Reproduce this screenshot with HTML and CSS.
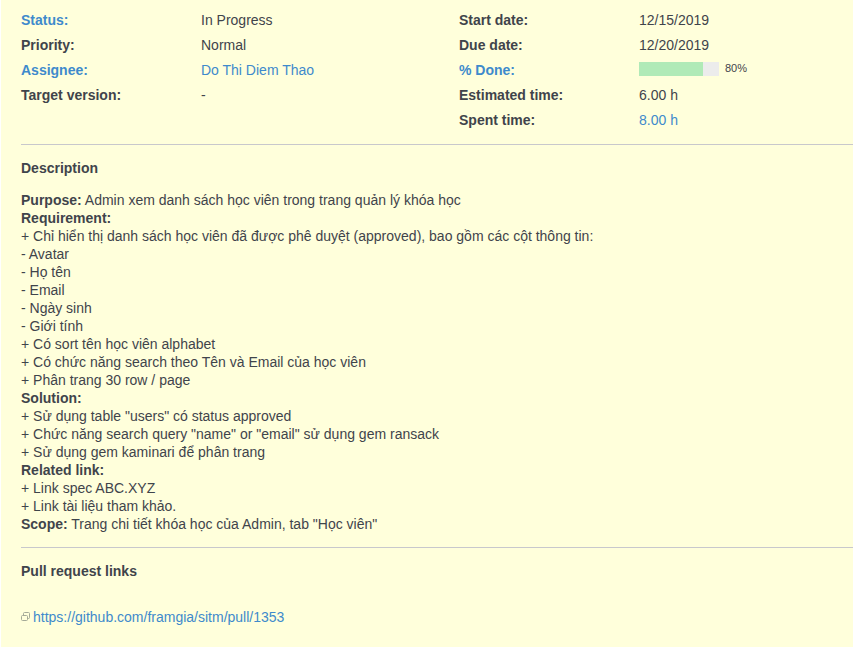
FILE: index.html
```html
<!DOCTYPE html>
<html lang="vi">
<head>
<meta charset="utf-8">
<title>Issue</title>
<link rel="stylesheet" href="styles.css">
</head>
<body>
<main class="issue">
  <section class="attributes">
    <dl class="attribute-list">
      <dt><a href="#status">Status:</a></dt><dd>In Progress</dd>
      <dt>Priority:</dt><dd>Normal</dd>
      <dt><a href="#assignee">Assignee:</a></dt><dd><a href="#user">Do Thi Diem Thao</a></dd>
      <dt>Target version:</dt><dd>-</dd>
    </dl>
    <dl class="attribute-list">
      <dt>Start date:</dt><dd>12/15/2019</dd>
      <dt>Due date:</dt><dd>12/20/2019</dd>
      <dt><a href="#done">% Done:</a></dt>
      <dd class="done"><span class="progress"><span class="progress-fill" style="width: 80%"></span></span><span class="percent">80%</span></dd>
      <dt>Estimated time:</dt><dd>6.00 h</dd>
      <dt>Spent time:</dt><dd><a href="#time">8.00 h</a></dd>
    </dl>
  </section>
  <section class="block description">
    <h2>Description</h2>
    <p><strong>Purpose:</strong> Admin xem danh sách học viên trong trang quản lý khóa học<br>
    <strong>Requirement:</strong><br>
    + Chỉ hiển thị danh sách học viên đã được phê duyệt (approved), bao gồm các cột thông tin:<br>
    - Avatar<br>
    - Họ tên<br>
    - Email<br>
    - Ngày sinh<br>
    - Giới tính<br>
    + Có sort tên học viên alphabet<br>
    + Có chức năng search theo Tên và Email của học viên<br>
    + Phân trang 30 row / page<br>
    <strong>Solution:</strong><br>
    + Sử dụng table "users" có status approved<br>
    + Chức năng search query "name" or "email" sử dụng gem ransack<br>
    + Sử dụng gem kaminari để phân trang<br>
    <strong>Related link:</strong><br>
    + Link spec ABC.XYZ<br>
    + Link tài liệu tham khảo.<br>
    <strong>Scope:</strong> Trang chi tiết khóa học của Admin, tab "Học viên"</p>
  </section>
  <section class="block pulls">
    <h2>Pull request links</h2>
    <a class="external" href="#pull-1353"><svg class="external-icon" viewBox="0 0 10 10" aria-hidden="true"><path d="M2.5 3V1.5Q2.5 0.5 3.5 0.5H7.5Q8.5 0.5 8.5 1.5V5.5Q8.5 6.5 7.5 6.5H7"/><rect x="0.5" y="3.5" width="6" height="5" rx="1"/></svg>https://github.com/framgia/sitm/pull/1353</a>
  </section>
</main>
</body>
</html>
```
FILE: styles.css
```css
* {
  box-sizing: border-box;
}

body {
  margin: 0;
  background: #fff;
  color: #3f444b;
  font: 14px/18px "Liberation Sans", Arial, sans-serif;
}

a {
  color: #3e8acc;
  text-decoration: none;
}

.issue {
  min-height: 100vh;
  margin-left: 1px;
  padding: 11px 0 20px 20px;
  background: #ffffdb;
}

.attributes {
  display: grid;
  grid-template-columns: 438px 1fr;
  padding-bottom: 8px;
}

.attribute-list {
  display: grid;
  grid-template-columns: 180px 1fr;
  grid-auto-rows: 18px;
  row-gap: 7px;
  margin: 0;
}

.attribute-list dt {
  font-weight: bold;
}

.attribute-list dd {
  margin: 0;
}

.attribute-list .done {
  display: flex;
  align-items: flex-start;
  gap: 6px;
  padding-top: 1px;
}

.progress {
  width: 80px;
  height: 14px;
  background: #ececec;
}

.progress-fill {
  display: block;
  height: 100%;
  background: #b0eab7;
}

.percent {
  font-size: 11px;
  line-height: 12px;
}

.block {
  margin-top: 7px;
  padding-top: 14px;
  border-top: 1px solid #c8c8cc;
}

.block h2 {
  margin: 0 0 14px;
  font-size: 14px;
  line-height: 18px;
}

.description p {
  margin: 0;
  padding-bottom: 7px;
}

.pulls h2 {
  margin-bottom: 28px;
}

.external {
  display: inline-flex;
  align-items: center;
  gap: 2px;
}

.external-icon {
  width: 10px;
  height: 10px;
  fill: none;
  stroke: #a5aa98;
  stroke-width: 1;
}
```
